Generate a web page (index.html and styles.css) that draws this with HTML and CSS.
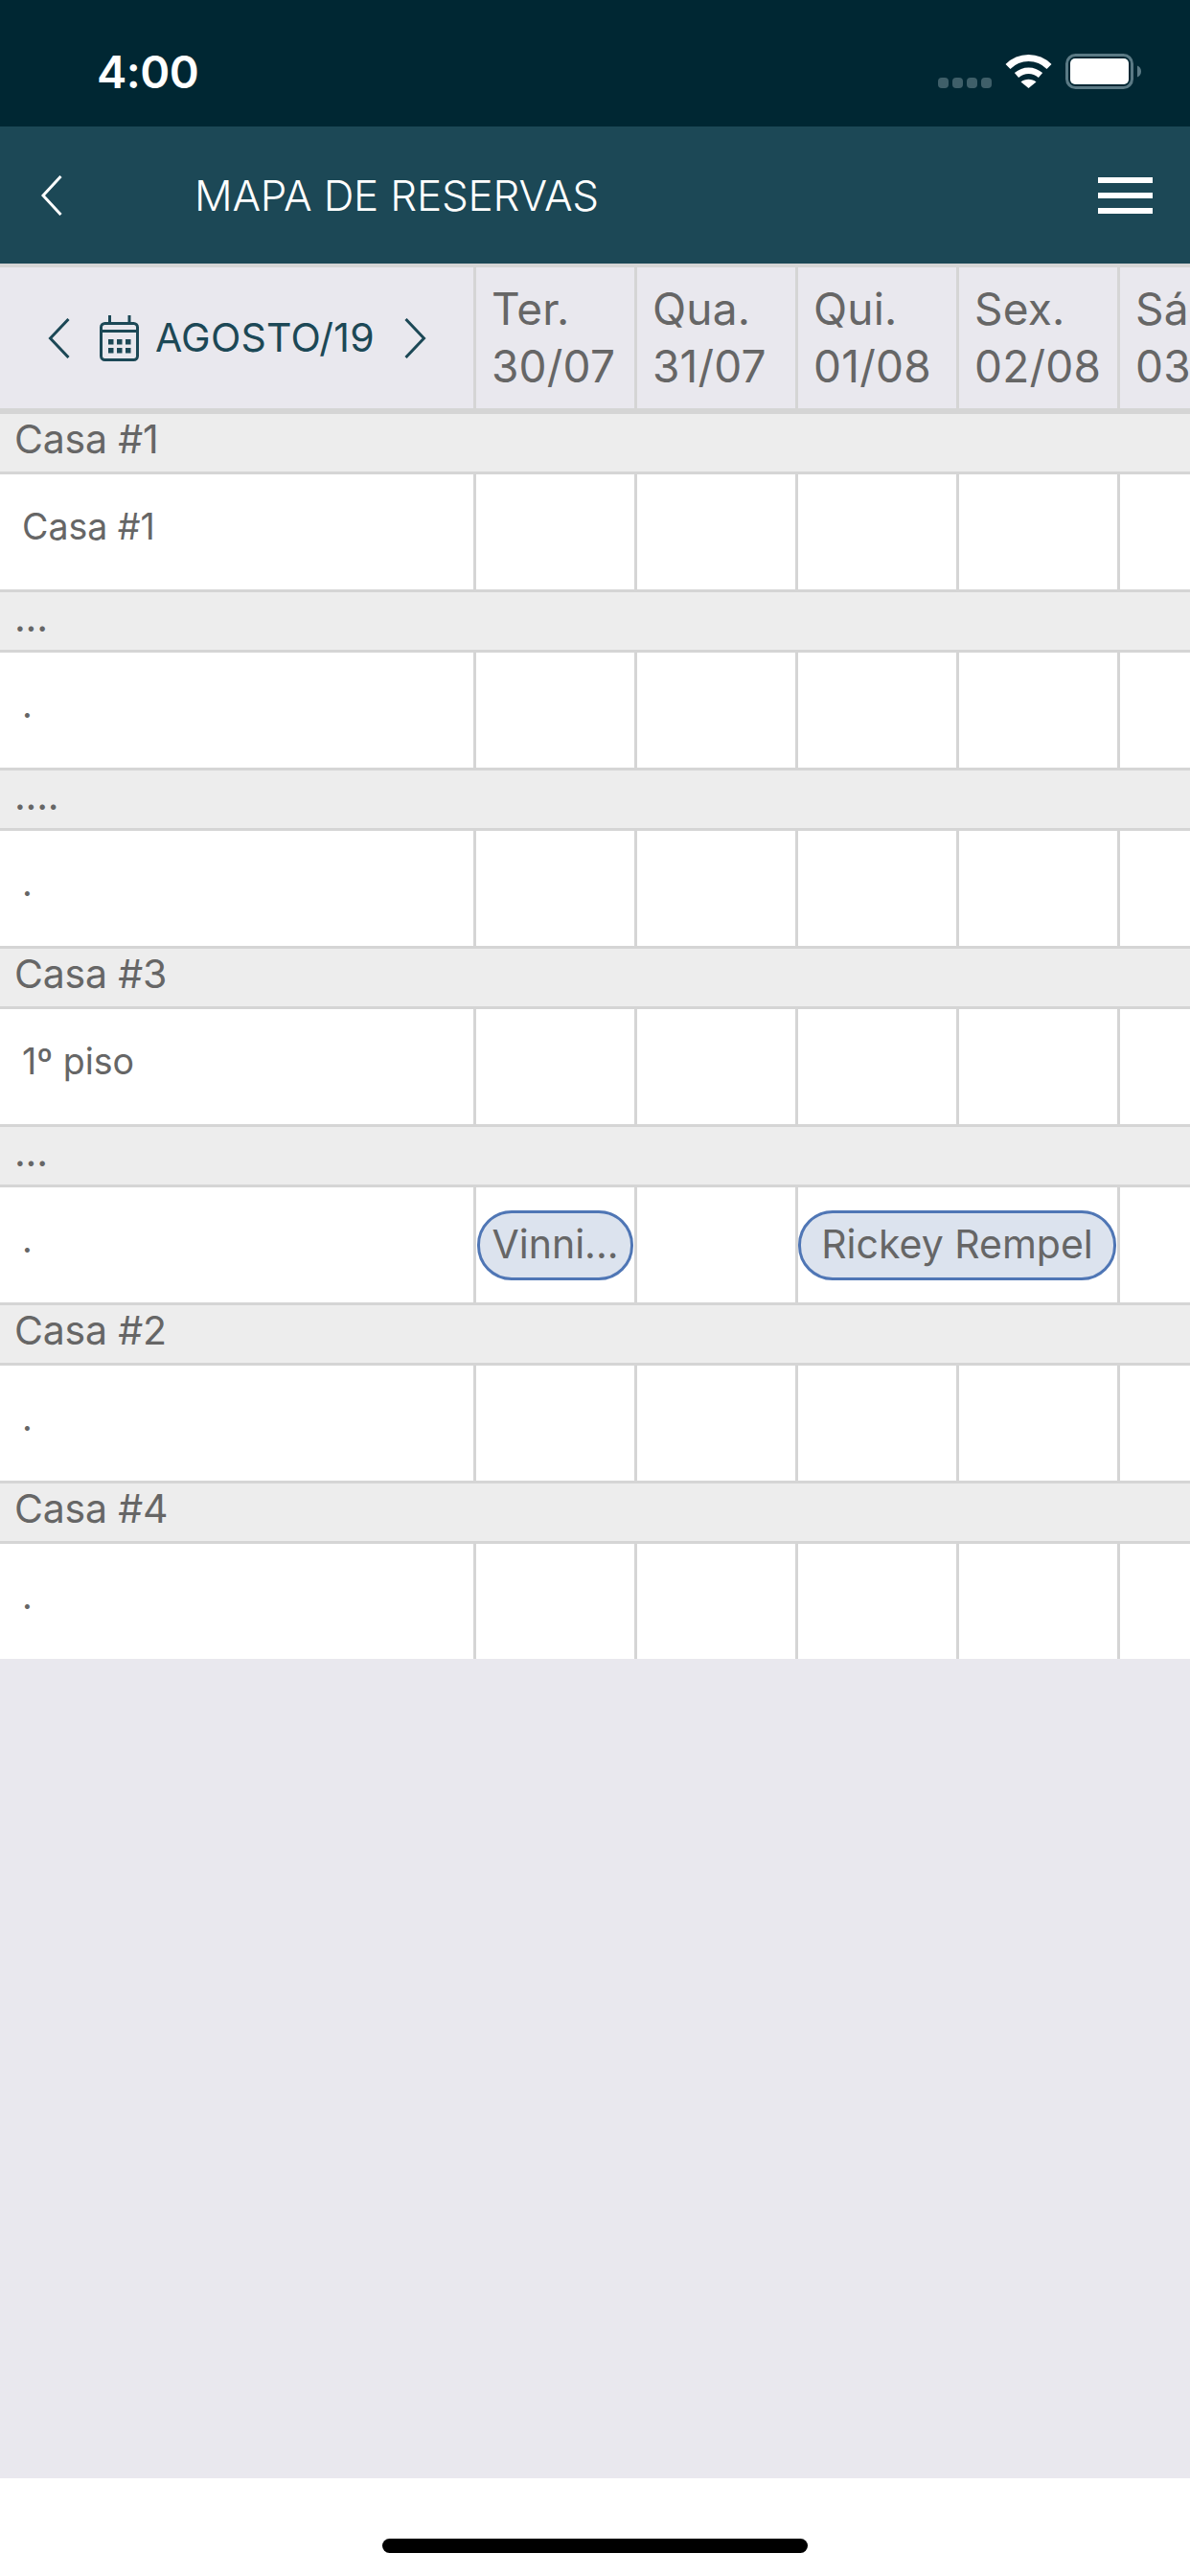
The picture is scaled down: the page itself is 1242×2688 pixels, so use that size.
FILE: index.html
```html
<!DOCTYPE html>
<html lang="pt">
<head>
<meta charset="utf-8">
<title>Mapa de Reservas</title>
<link rel="stylesheet" href="styles.css">
</head>
<body>
<div class="app">
  <div class="status">
    <span class="time">4:00</span>
    <div class="status-icons">
      <svg class="signal" viewBox="0 0 56 11" width="56" height="11"><g fill="#3f5f69"><rect x="0" width="11" height="11" rx="4"/><rect x="15" width="11" height="11" rx="4"/><rect x="30" width="11" height="11" rx="4"/><rect x="45" width="11" height="11" rx="4"/></g></svg>
      <svg class="wifi" viewBox="0 0 49 36" width="49" height="36"><g fill="none" stroke="#fff" stroke-linecap="butt"><path d="M3 13.5C15 1.5 34 1.5 46 13.5" stroke-width="7"/><path d="M12 22.5C19.500 16 29.500 16 37 22.500" stroke-width="6.500"/></g><path d="M16.500 29.500C21 25.800 28 25.800 32.500 29.500L24.500 36Z" fill="#fff"/></svg>
      <svg class="battery" viewBox="0 0 79 37" width="79" height="37"><rect x="1.500" y="1.500" width="68" height="34" rx="9" fill="none" stroke="#5b7a85" stroke-width="3"/><rect x="5" y="5" width="61" height="27" rx="5" fill="#fff"/><path d="M75 12.500C77.500 13.500 79 15.500 79 18.500S77.500 23.500 75 24.500Z" fill="#5b7a85"/></svg>
    </div>
  </div>

  <header class="nav">
    <svg class="nav-back" viewBox="0 0 22 42" width="22" height="42"><path d="M20.500 1L2 21L20.500 41" fill="none" stroke="#fff" stroke-width="3"/></svg>
    <h1 class="nav-title">MAPA DE RESERVAS</h1>
    <div class="burger"><span></span><span></span><span></span></div>
  </header>

  <main class="map">
    <div class="head">
      <div class="month">
        <svg class="chev" viewBox="0 0 23 42" width="23" height="42"><path d="M21.500 1L2.500 21L21.500 41" fill="none" stroke="#1c4856" stroke-width="3"/></svg>
        <svg class="cal" viewBox="0 0 41 48" width="41" height="48"><g fill="none" stroke="#1c4856" stroke-width="3"><rect x="1.500" y="8.500" width="38" height="38" rx="4"/><path d="M1.500 16.500H39.500M10.500 0V8M31 0V8"/></g><g fill="#1c4856"><rect x="9" y="25" width="5.500" height="5.500"/><rect x="18" y="25" width="5.500" height="5.500"/><rect x="27" y="25" width="5.500" height="5.500"/><rect x="9" y="34" width="5.500" height="5.500"/><rect x="18" y="34" width="5.500" height="5.500"/><rect x="27" y="34" width="5.500" height="5.500"/></g></svg>
        <span class="month-label">AGOSTO/19</span>
        <svg class="chev" viewBox="0 0 23 42" width="23" height="42"><path d="M1.500 1L20.500 21L1.500 41" fill="none" stroke="#1c4856" stroke-width="3"/></svg>
      </div>
      <div class="day">Ter.<br>30/07</div>
      <div class="day">Qua.<br>31/07</div>
      <div class="day">Qui.<br>01/08</div>
      <div class="day">Sex.<br>02/08</div>
      <div class="day last">Sáb.<br>03/08</div>
    </div>

    <div class="group">Casa #1</div>
    <div class="row"><div class="label">Casa #1</div><div class="cell"></div><div class="cell"></div><div class="cell"></div><div class="cell"></div><div class="cell last"></div></div>

    <div class="group">...</div>
    <div class="row"><div class="label">.</div><div class="cell"></div><div class="cell"></div><div class="cell"></div><div class="cell"></div><div class="cell last"></div></div>

    <div class="group">....</div>
    <div class="row"><div class="label">.</div><div class="cell"></div><div class="cell"></div><div class="cell"></div><div class="cell"></div><div class="cell last"></div></div>

    <div class="group">Casa #3</div>
    <div class="row"><div class="label">1º piso</div><div class="cell"></div><div class="cell"></div><div class="cell"></div><div class="cell"></div><div class="cell last"></div></div>

    <div class="group">...</div>
    <div class="row"><div class="label">.</div><div class="cell"><div class="chip">Vinni...</div></div><div class="cell"></div><div class="cell span2"><div class="chip">Rickey Rempel</div></div><div class="cell last"></div></div>

    <div class="group">Casa #2</div>
    <div class="row"><div class="label">.</div><div class="cell"></div><div class="cell"></div><div class="cell"></div><div class="cell"></div><div class="cell last"></div></div>

    <div class="group">Casa #4</div>
    <div class="row end"><div class="label">.</div><div class="cell"></div><div class="cell"></div><div class="cell"></div><div class="cell"></div><div class="cell last"></div></div>
  </main>

  <div class="fill"></div>

  <div class="home"><span class="home-bar"></span></div>
</div>
</body>
</html>
```

FILE: styles.css
```css
* { box-sizing: border-box; }
html, body { margin: 0; padding: 0; }
body {
  width: 1242px;
  height: 2688px;
  overflow: hidden;
  background: #e9e8ee;
  font-family: Inter, "Liberation Sans", sans-serif;
  color: #666;
}
.app { display: flex; flex-direction: column; height: 2688px; }

.status {
  height: 132px;
  flex: none;
  background: #002733;
  display: flex;
  justify-content: space-between;
  padding: 51px 51px 0 101px;
}
.time {
  font-size: 47px;
  line-height: 48px;
  font-weight: 600;
  color: #fff;
  letter-spacing: -0.5px;
}
.status-icons { display: flex; align-items: flex-start; padding-top: 5px; }
.signal { margin-top: 25px; }
.wifi { margin-left: 14px; }
.battery { margin-left: 14px; }

.nav {
  height: 143px;
  flex: none;
  background: #1c4856;
  display: flex;
  align-items: center;
  padding: 0 39px 0 43px;
}
.nav-back { flex: none; margin-top: 1px; }
.nav-title {
  margin: 0 0 0 138px;
  flex: 1;
  font-size: 44px;
  font-weight: 300;
  color: #fff;
  letter-spacing: -0.2px;
  white-space: nowrap;
}
.burger { width: 57px; display: flex; flex-direction: column; gap: 10px; }
.burger span { height: 6px; background: #fff; }

.map { flex: none; }

.head {
  display: flex;
  height: 157px;
  border-top: 4px solid #d5d5d5;
  border-bottom: 6px solid #d5d5d5;
  background: #e9e8ee;
}
.month {
  width: 497px;
  flex: none;
  display: flex;
  align-items: center;
  padding-left: 50px;
  border-right: 3px solid #d5d5d5;
}
.cal { margin-left: 31px; }
.month-label {
  margin: 0 32px 2px 17px;
  width: 228px;
  font-size: 41px;
  color: #1c4856;
  white-space: nowrap;
  letter-spacing: 0.2px;
}
.day {
  width: 168px;
  flex: none;
  padding: 13px 0 0 16px;
  font-size: 46px;
  line-height: 60px;
  border-right: 3px solid #d5d5d5;
  overflow: hidden;
  white-space: nowrap;
  letter-spacing: 0.2px;
}
.day.last { flex: 1; width: auto; border-right: 0; }

.group {
  height: 63px;
  padding: 0 0 0 15px;
  font-size: 41px;
  line-height: 52px;
  background: #ededed;
  border-bottom: 3px solid #d5d5d5;
  letter-spacing: -0.2px;
}

.row {
  display: flex;
  height: 123px;
  background: #fff;
  border-bottom: 3px solid #d5d5d5;
}
.row.end { height: 120px; border-bottom: 0; }
.label {
  width: 497px;
  flex: none;
  padding: 0 0 12px 23px;
  display: flex;
  align-items: center;
  font-size: 37.500px;
  border-right: 3px solid #d5d5d5;
}
.cell {
  width: 168px;
  flex: none;
  display: flex;
  align-items: center;
  padding: 0 1px;
  border-right: 3px solid #d5d5d5;
}
.cell.span2 { width: 336px; padding: 0 1px 0 0; }
.cell.last { flex: 1; width: auto; border-right: 0; }

.chip {
  flex: 1;
  height: 73px;
  display: flex;
  align-items: center;
  justify-content: center;
  padding-bottom: 3px;
  border: 3px solid #4f76b5;
  border-radius: 36px;
  background: #dce3ee;
  font-size: 41px;
  white-space: nowrap;
}

.fill { flex: 1; }

.home {
  height: 102px;
  flex: none;
  background: #fff;
  padding-top: 63px;
  display: flex;
  justify-content: center;
  align-items: flex-start;
}
.home-bar { width: 444px; height: 15px; border-radius: 8px; background: #000; }
```
